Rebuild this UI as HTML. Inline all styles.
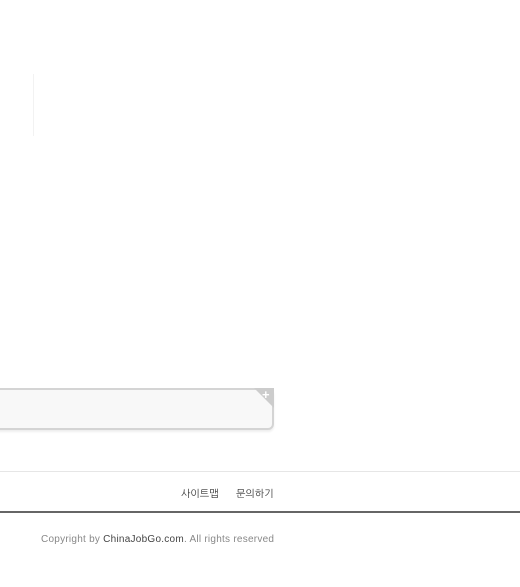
<!DOCTYPE html>
<html><head><meta charset="utf-8"><style>
body{margin:0;width:520px;height:587px;background:#fff;position:relative;overflow:hidden;font-family:"Liberation Sans","NanumGothic","Noto Sans CJK KR",sans-serif}
.vl{position:absolute;left:33px;top:74px;width:1px;height:62px;background:#f2f2f2}
.box{position:absolute;left:-10px;top:388px;width:280px;height:38px;background:#f8f8f8;border:2px solid #d4d4d4;border-radius:6px;box-shadow:0 2px 2px #eee}
.corner{position:absolute;left:254px;top:388px;width:0;height:0;border-top:20px solid #ccc;border-left:20px solid transparent}
.plus{position:absolute;left:262px;top:389px;color:#fff;font-size:13px;font-weight:bold;line-height:12px}
.l1{position:absolute;left:0;top:471px;width:520px;height:1px;background:#e6e6e6}
.menu{position:absolute;top:488px;font-size:10px;color:#333}
.l2{position:absolute;left:0;top:511px;width:520px;height:2px;background:#666}
.copy{position:absolute;left:41px;top:534px;font-size:10px;color:#888;letter-spacing:0.25px}
.copy b{color:#444;font-weight:normal}
</style></head><body>
<div class="vl"></div>
<div class="box"></div><div class="corner"></div><div class="plus">+</div>
<div class="l1"></div>
<div class="menu" style="left:181px">사이트맵</div>
<div class="menu" style="left:236px">문의하기</div>
<div class="l2"></div>
<div class="copy">Copyright by <b>ChinaJobGo.com</b>. All rights reserved</div>
</body></html>
